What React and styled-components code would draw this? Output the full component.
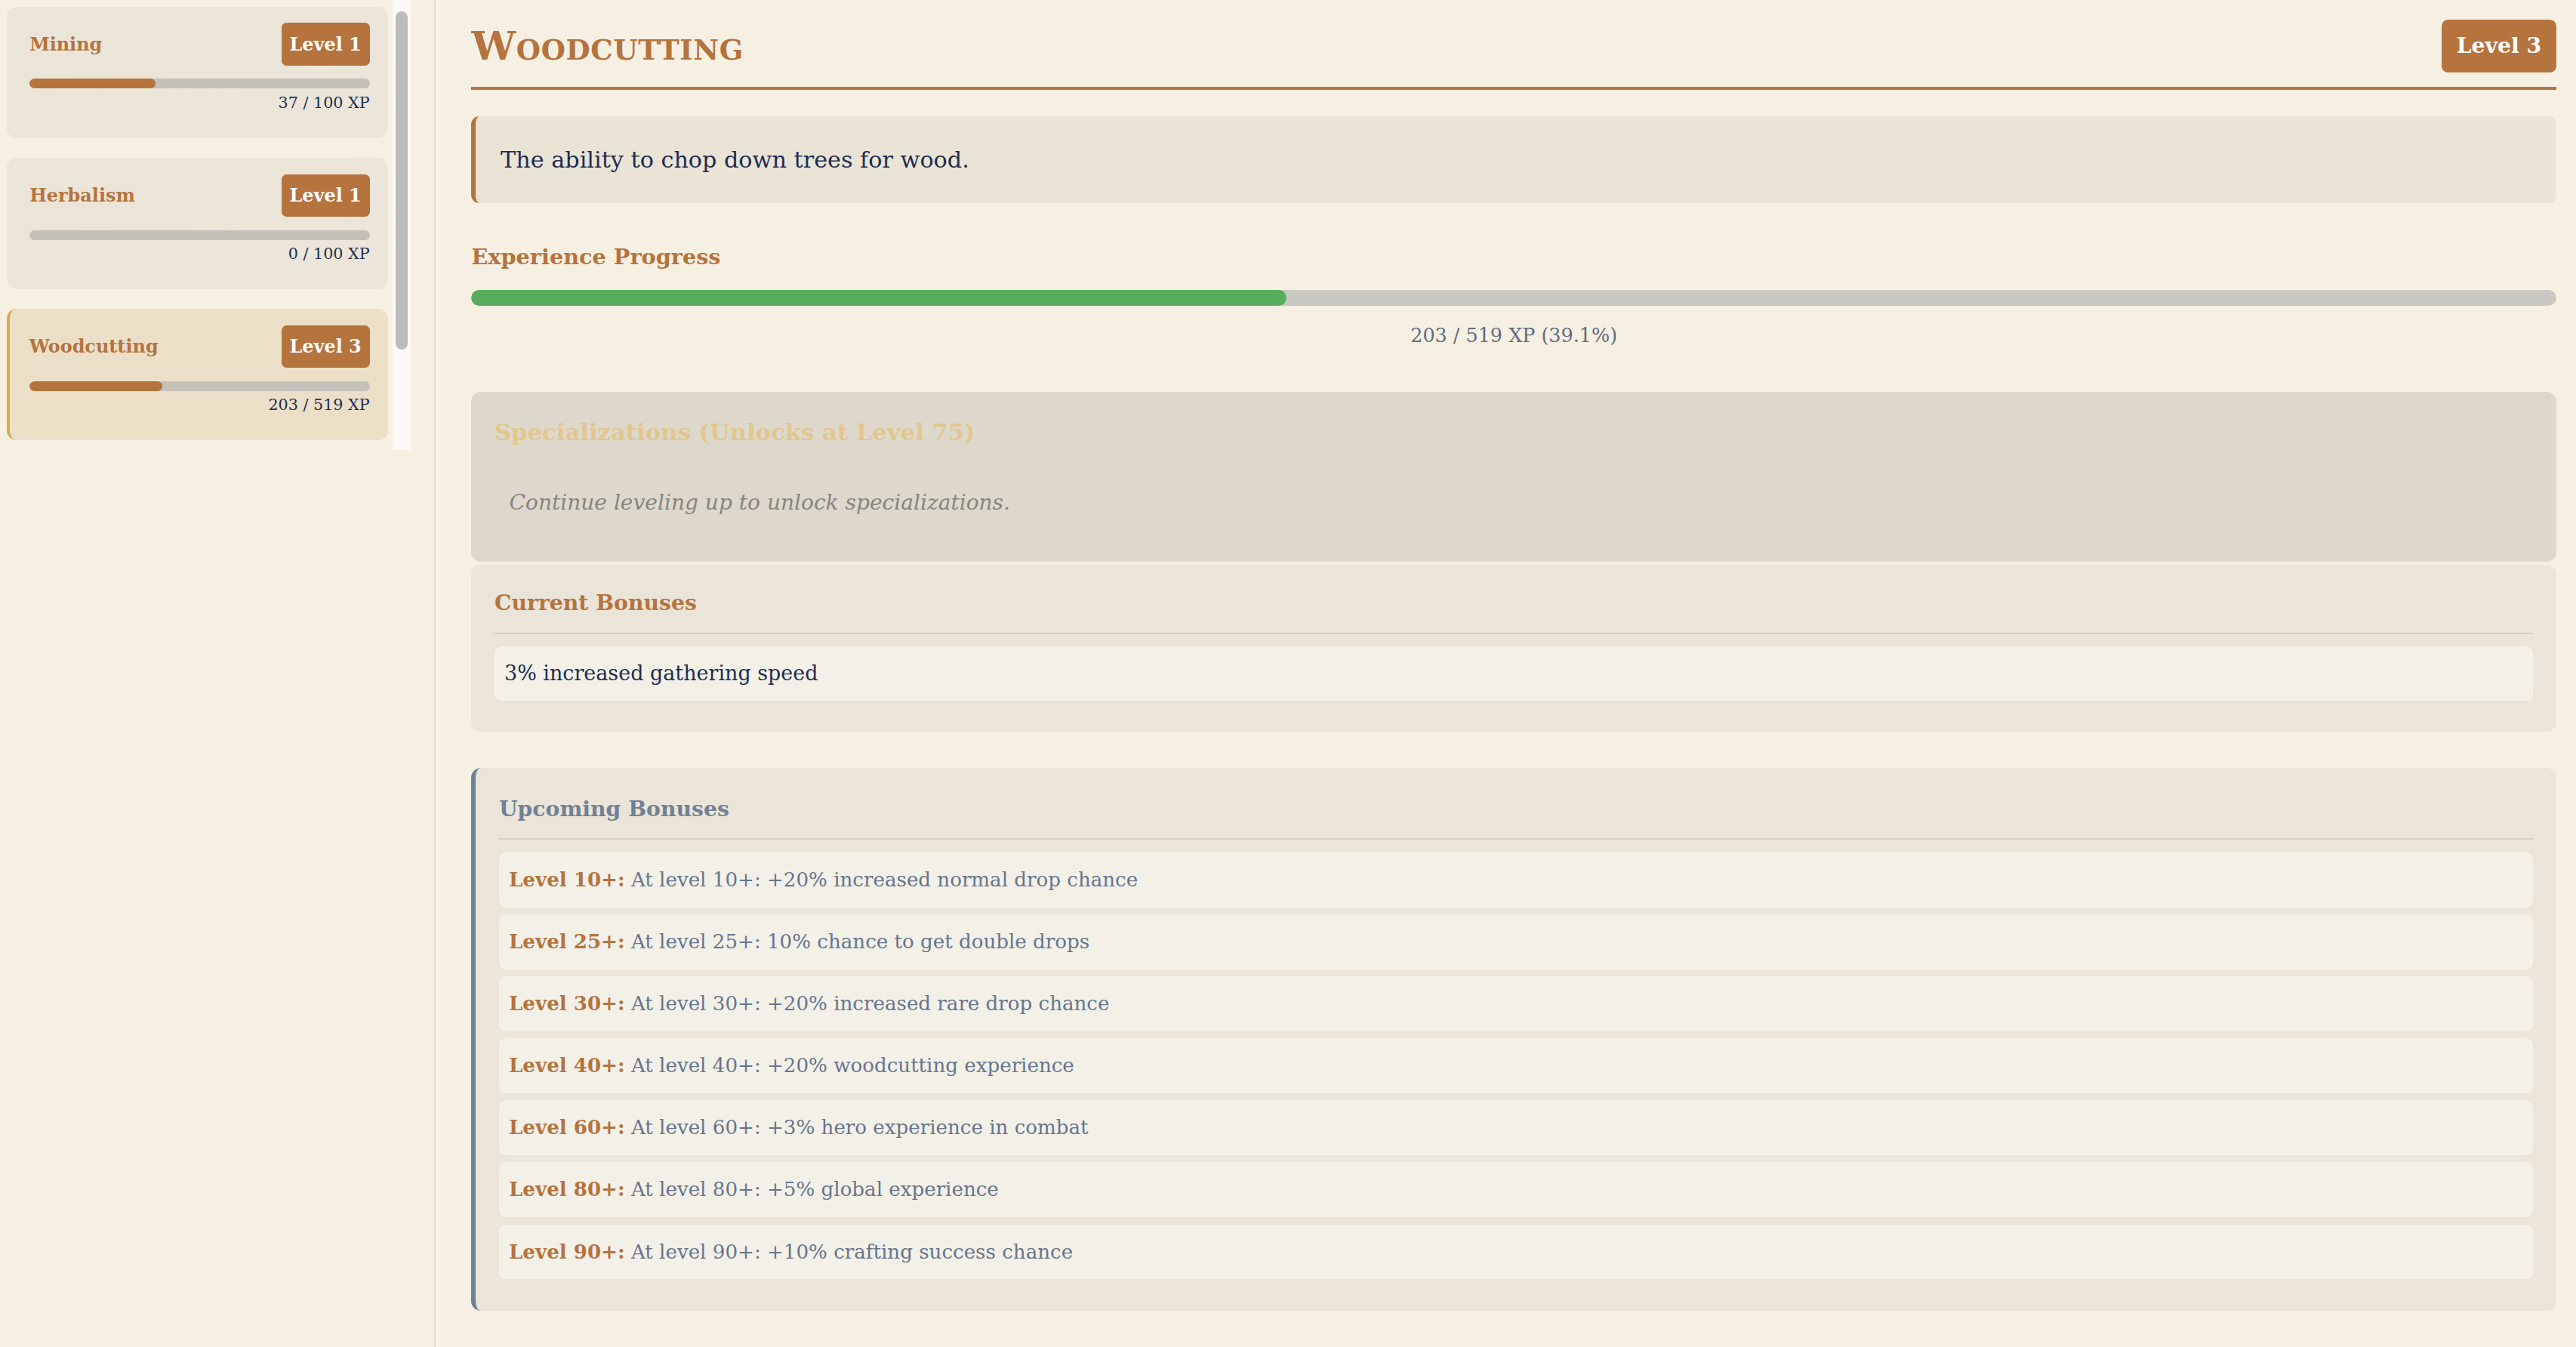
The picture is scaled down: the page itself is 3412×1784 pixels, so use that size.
import React from "react";
import styled, { createGlobalStyle } from "styled-components";

const Global = createGlobalStyle`
  html, body { margin: 0; padding: 0; background: #f6f0e3; overflow: hidden; }
  body { font-family: "DejaVu Serif", "Liberation Serif", serif; color: #1e2d4f; }
`;

const skills = [
  { name: "Mining", level: 1, xp: 37, max: 100 },
  { name: "Herbalism", level: 1, xp: 0, max: 100 },
  { name: "Woodcutting", level: 3, xp: 203, max: 519, active: true },
];

const upcoming = [
  ["10", "+20% increased normal drop chance"],
  ["25", "10% chance to get double drops"],
  ["30", "+20% increased rare drop chance"],
  ["40", "+20% woodcutting experience"],
  ["60", "+3% hero experience in combat"],
  ["80", "+5% global experience"],
  ["90", "+10% crafting success chance"],
];

const App = () => (
  <>
    <Global />
    <Page>
      <Sidebar>
        <SkillList>
          {skills.map((s) => (
            <SkillCard key={s.name} $active={s.active}>
              <CardHead>
                <SkillName>{s.name}</SkillName>
                <Badge>Level {s.level}</Badge>
              </CardHead>
              <Track>
                <Fill style={{ width: `${(s.xp / s.max) * 100}%` }} />
              </Track>
              <XpText>{s.xp} / {s.max} XP</XpText>
            </SkillCard>
          ))}
        </SkillList>
        <Scrollbar><Thumb /></Scrollbar>
      </Sidebar>
      <Main>
        <Header>
          <Title>Woodcutting</Title>
          <BigBadge>Level 3</BigBadge>
        </Header>
        <Description>The ability to chop down trees for wood.</Description>
        <SectionTitle>Experience Progress</SectionTitle>
        <BigTrack>
          <BigFill style={{ width: "39.1%" }} />
        </BigTrack>
        <ProgressText>203 / 519 XP (39.1%)</ProgressText>
        <SpecBox>
          <SpecTitle>Specializations (Unlocks at Level 75)</SpecTitle>
          <SpecText>Continue leveling up to unlock specializations.</SpecText>
        </SpecBox>
        <Panel>
          <PanelTitle>Current Bonuses</PanelTitle>
          <BonusRow>3% increased gathering speed</BonusRow>
        </Panel>
        <Panel $border="#718096" $mt="22px">
          <PanelTitle $color="#718096">Upcoming Bonuses</PanelTitle>
          <Rows>
            {upcoming.map(([lvl, txt]) => (
              <BonusRow key={lvl} $muted>
                <LevelTag>Level {lvl}+:</LevelTag> At level {lvl}+: {txt}
              </BonusRow>
            ))}
          </Rows>
        </Panel>
        <Panel $border="#d4a944" $mt="22px" style={{ height: 60 }} />
      </Main>
    </Page>
  </>
);

export default App;

const Page = styled.div`
  zoom: 2.176;
  width: 1568px;
  height: 820px;
  display: grid;
  grid-template-columns: 265px 1fr;
  overflow: hidden;
`;

const Sidebar = styled.aside`
  border-right: 1px solid #e4dccb;
  display: flex;
  align-items: flex-start;
  padding: 4px 0 0 4px;
  gap: 3px;
`;

const SkillList = styled.div`
  width: 232px;
  display: flex;
  flex-direction: column;
  gap: 12px;
`;

const SkillCard = styled.div`
  height: 80px;
  box-sizing: border-box;
  border-radius: 6px;
  padding: 10px 11px 0 14px;
  background: ${({ $active }) =>
    $active ? "#ecdfc8" : "linear-gradient(135deg, #ebe5d8, #ece6da)"};
  border-left: ${({ $active }) => ($active ? "2px solid #d6ad4c" : "none")};
  padding-left: ${({ $active }) => ($active ? "12px" : "14px")};
`;

const CardHead = styled.div`
  display: flex;
  justify-content: space-between;
  align-items: center;
`;

const SkillName = styled.span`
  color: #b5733e;
  font-size: 11px;
  font-weight: bold;
`;

const Badge = styled.span`
  background: #b5733e;
  color: #fff;
  font-size: 11px;
  font-weight: bold;
  padding: 6px 5px;
  border-radius: 3px;
  line-height: 14px;
`;

const Track = styled.div`
  margin-top: 8px;
  height: 6px;
  border-radius: 3px;
  background: #c3c1ba;
  overflow: hidden;
`;

const Fill = styled.div`
  height: 100%;
  background: #b5733e;
  border-radius: 3px;
`;

const XpText = styled.div`
  text-align: right;
  font-size: 9.5px;
  margin-top: 3px;
`;

const Scrollbar = styled.div`
  width: 11px;
  height: 274px;
  margin-top: -4px;
  background: #fbfaf7;
  display: flex;
  justify-content: center;
  padding-top: 7px;
  box-sizing: border-box;
`;

const Thumb = styled.div`
  width: 7px;
  height: 206px;
  border-radius: 4px;
  background: #bdbdbd;
`;

const Main = styled.main`
  padding: 12px 12px 0 22px;
  display: flex;
  flex-direction: column;
`;

const Header = styled.div`
  display: flex;
  justify-content: space-between;
  align-items: center;
  padding-bottom: 9px;
  border-bottom: 2px solid #b5733e;
`;

const Title = styled.h1`
  margin: 0;
  font-variant: small-caps;
  font-size: 24px;
  line-height: 32px;
  color: #b5733e;
  letter-spacing: 0.3px;
`;

const BigBadge = styled.span`
  background: #b5733e;
  color: #fff;
  font-size: 13px;
  line-height: 20px;
  font-weight: bold;
  padding: 6px 9px;
  border-radius: 4px;
`;

const Description = styled.div`
  margin-top: 16px;
  padding: 15.5px 15px;
  background: #eae4d7;
  border-left: 3px solid #b5733e;
  border-radius: 5px;
  font-size: 13.9px;
  line-height: 22px;
`;

const SectionTitle = styled.h3`
  margin: 21px 0 8.5px;
  font-size: 13.2px;
  line-height: 23px;
  color: #b5733e;
`;

const BigTrack = styled.div`
  height: 10px;
  border-radius: 5px;
  background: #c9c8c2;
  overflow: hidden;
`;

const BigFill = styled.div`
  height: 100%;
  background: #57ad5b;
  border-radius: 5px;
`;

const ProgressText = styled.div`
  text-align: center;
  color: #5e6b80;
  font-size: 11.7px;
  line-height: 21px;
  margin-top: 7.5px;
`;

const SpecBox = styled.div`
  margin-top: 23.5px;
  background: #ddd8cb;
  border-radius: 6px;
  padding: 12px 14px 25px;
`;

const SpecTitle = styled.h3`
  margin: 0;
  font-size: 14.1px;
  line-height: 25.6px;
  color: #e2c68d;
`;

const SpecText = styled.p`
  margin: 19px 0 0 9px;
  font-style: italic;
  font-size: 12.9px;
  line-height: 22px;
  color: #868582;
`;

const Panel = styled.div`
  margin-top: ${({ $mt }) => $mt || "2px"};
  background: #eae5d8;
  border-radius: 6px;
  border-left: ${({ $border }) => ($border ? `3px solid ${$border}` : "none")};
  padding: ${({ $border }) => ($border ? "13.5px" : "11.5px")} 14px 19px 14px;
  flex-shrink: 0;
`;

const PanelTitle = styled.h3`
  margin: 0 0 7.5px;
  padding-bottom: 6.5px;
  border-bottom: 1px solid #d3cfc6;
  font-size: 13px;
  line-height: 23px;
  color: ${({ $color }) => $color || "#b5733e"};
`;

const Rows = styled.div`
  display: flex;
  flex-direction: column;
  gap: 4.3px;
`;

const BonusRow = styled.div`
  background: #f3f0e8;
  border-radius: 4px;
  padding: 6px 6px;
  font-size: ${({ $muted }) => ($muted ? "12px" : "12.4px")};
  line-height: 21px;
  color: ${({ $muted }) => ($muted ? "#66758c" : "#1e2d4f")};
`;

const LevelTag = styled.b`
  color: #b5733e;
`;
